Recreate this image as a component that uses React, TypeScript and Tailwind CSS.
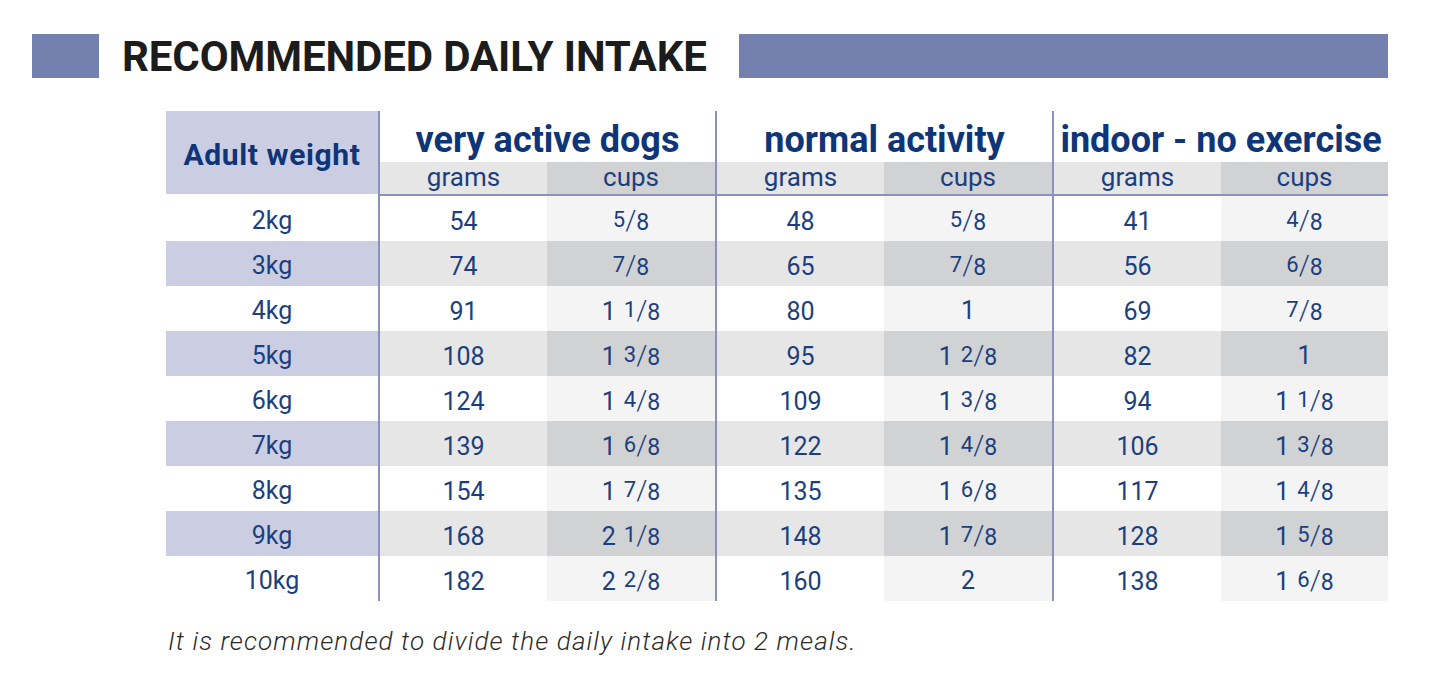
import React from "react";

const rows: string[][] = [
  ["2kg", "54", "5/8", "48", "5/8", "41", "4/8"],
  ["3kg", "74", "7/8", "65", "7/8", "56", "6/8"],
  ["4kg", "91", "1 1/8", "80", "1", "69", "7/8"],
  ["5kg", "108", "1 3/8", "95", "1 2/8", "82", "1"],
  ["6kg", "124", "1 4/8", "109", "1 3/8", "94", "1 1/8"],
  ["7kg", "139", "1 6/8", "122", "1 4/8", "106", "1 3/8"],
  ["8kg", "154", "1 7/8", "135", "1 6/8", "117", "1 4/8"],
  ["9kg", "168", "2 1/8", "148", "1 7/8", "128", "1 5/8"],
  ["10kg", "182", "2 2/8", "160", "2", "138", "1 6/8"],
];

const groups = ["very active dogs", "normal activity", "indoor - no exercise"];

function Cup({ v }: { v: string }) {
  const parts = v.split(" ");
  let whole = "";
  let frac = "";
  if (parts.length === 2) {
    whole = parts[0];
    frac = parts[1];
  } else if (v.includes("/")) {
    frac = v;
  } else {
    whole = v;
  }
  const [num, den] = frac ? frac.split("/") : ["", ""];
  return (
    <span className="whitespace-nowrap">
      {whole && <span>{whole}</span>}
      {whole && frac && <span className="inline-block w-[8px]" />}
      {frac && (
        <>
          <span className="text-[22px] align-[3px]">{num}</span>
          <span className="text-[28px] font-light">/</span>
          <span className="text-[23px]">{den}</span>
        </>
      )}
    </span>
  );
}

export default function App() {
  return (
    <div className="w-[1440px] h-[677px] bg-white overflow-hidden font-['Roboto',sans-serif]">
      {/* Title bar */}
      <div className="flex items-start pt-[34px] pl-[32px] pr-[52px]">
        <div className="w-[67px] h-[44px] bg-[#7480ad]" />
        <div className="ml-[23px] h-[44px] pt-[2px] leading-[42px] text-[42px] font-bold tracking-[-0.1px] text-[#1c1c1c] whitespace-nowrap">
          RECOMMENDED DAILY INTAKE
        </div>
        <div className="ml-[32px] flex-1 h-[44px] bg-[#7480ad]" />
      </div>

      {/* Table */}
      <div className="mt-[33px] ml-[166px] w-[1222px] text-[#1b3f7e]">
        {/* Header */}
        <div className="flex h-[85px]">
          <div className="w-[212px] h-[85px]">
            <div className="h-[83px] bg-[#cbcee3] flex items-center justify-center pt-[4px] text-[30px] font-bold tracking-[0.6px] text-[#0d3578]">
              Adult weight
            </div>
          </div>
          {groups.map((g, i) => (
            <div
              key={g}
              className={`border-l-2 border-[#8a91c1] flex flex-col ${i === 2 ? "w-[336px]" : "w-[337px]"}`}
            >
              <div className="h-[51px] flex items-end justify-center pb-[4px] text-[36px] leading-[36px] font-bold text-[#0d3578] whitespace-nowrap">
                {g}
              </div>
              <div className="h-[34px] flex border-b-2 border-[#8a91c1] text-[26px] leading-none">
                <div className="w-[167px] bg-[#e6e6e7] flex items-center justify-center pb-[2px]">grams</div>
                <div className="flex-1 bg-[#d1d2d4] flex items-center justify-center pb-[2px]">cups</div>
              </div>
            </div>
          ))}
        </div>

        {/* Rows */}
        {rows.map((r, ri) => {
          const even = ri % 2 === 1;
          return (
            <div key={r[0]} className="flex h-[45px] text-[25px] leading-none">
              <div
                className={`w-[212px] flex items-center justify-center pt-[3px] ${even ? "bg-[#cbcee3]" : "bg-white"}`}
              >
                {r[0]}
              </div>
              {[0, 1, 2].map((gi) => (
                <React.Fragment key={gi}>
                  <div
                    className={`w-[169px] border-l-2 border-[#8a91c1] flex items-center justify-center pt-[5px] ${even ? "bg-[#e6e6e7]" : "bg-white"}`}
                  >
                    {r[1 + gi * 2]}
                  </div>
                  <div
                    className={`${gi === 2 ? "w-[167px]" : "w-[168px]"} flex items-center justify-center pt-[4px] ${even ? "bg-[#d1d2d4]" : "bg-[#f4f4f4]"}`}
                  >
                    <Cup v={r[2 + gi * 2]} />
                  </div>
                </React.Fragment>
              ))}
            </div>
          );
        })}
      </div>

      {/* Footnote */}
      <div className="mt-[25px] ml-[168px] text-[26px] leading-[30px] italic font-light tracking-[1.1px] text-[#2b2b2b] whitespace-nowrap">
        It is recommended to divide the daily intake into 2 meals.
      </div>
    </div>
  );
}
